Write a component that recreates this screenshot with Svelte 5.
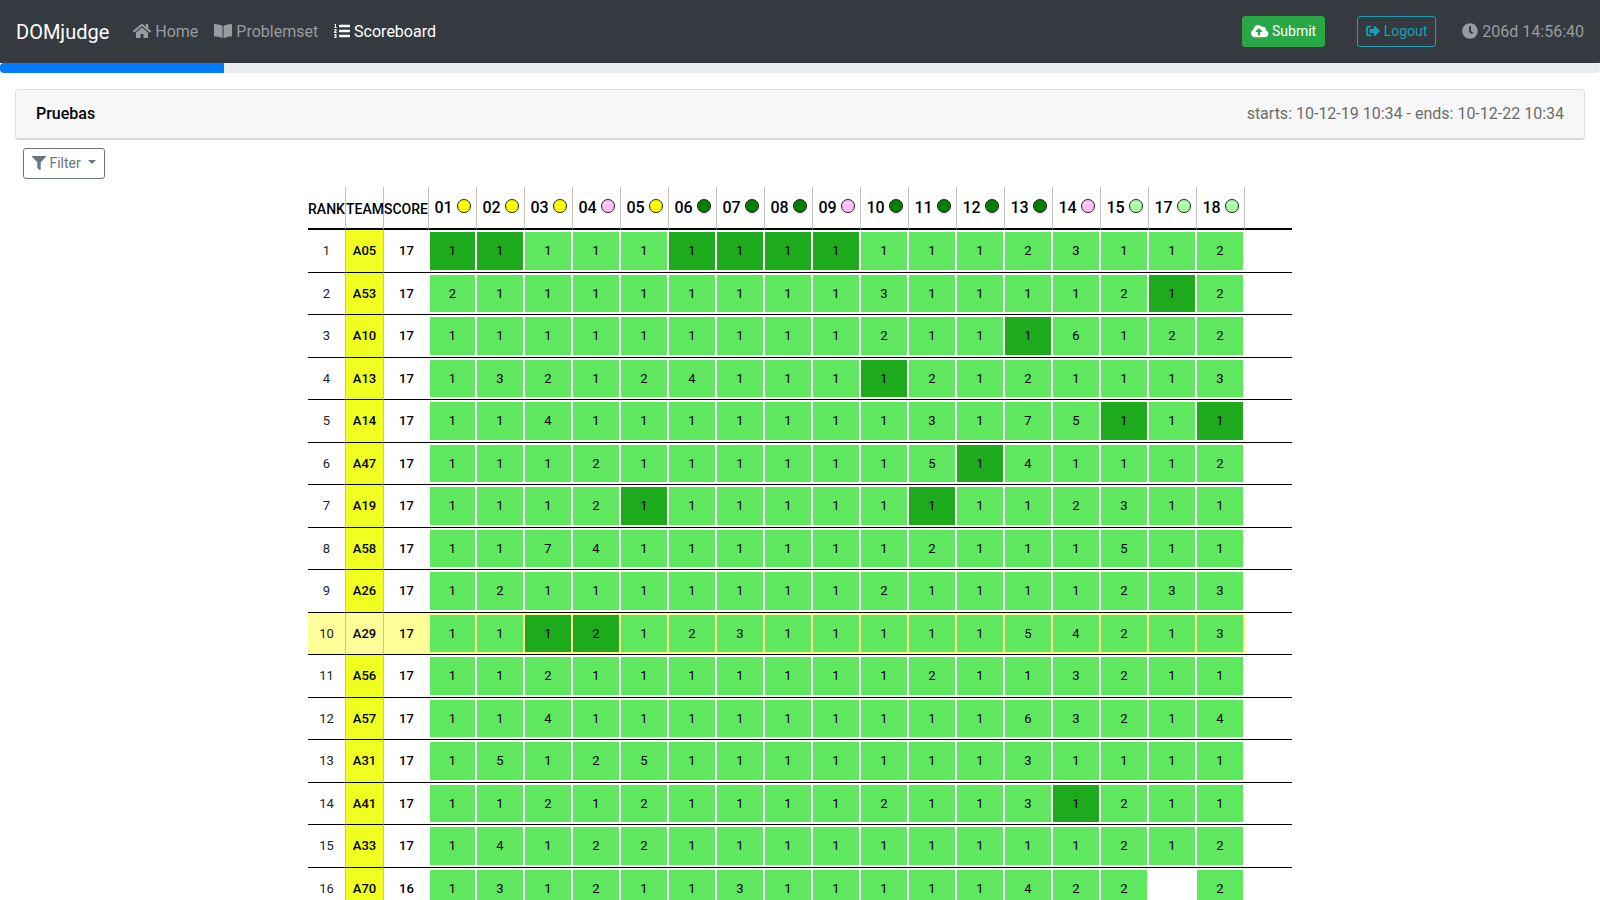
<script>
  const icons = {
    home: { w: 576, d: 'M280.37 148.26L96 300.11V464a16 16 0 0 0 16 16l112.06-.29a16 16 0 0 0 15.92-16V368a16 16 0 0 1 16-16h64a16 16 0 0 1 16 16v95.64a16 16 0 0 0 16 16.05L464 480a16 16 0 0 0 16-16V300L295.67 148.26a12.19 12.19 0 0 0-15.3 0zM571.6 251.47L488 182.56V44.05a12 12 0 0 0-12-12h-56a12 12 0 0 0-12 12v72.61L318.47 43a48 48 0 0 0-61 0L4.34 251.47a12 12 0 0 0-1.6 16.9l25.5 31A12 12 0 0 0 45.15 301l235.22-193.74a12.19 12.19 0 0 1 15.3 0L530.9 301a12 12 0 0 0 16.9-1.6l25.5-31a12 12 0 0 0-1.7-16.93z' },
    book: { w: 576, d: 'M542.22 32.05c-54.8 3.11-163.72 14.43-230.96 55.59-4.64 2.84-7.27 7.89-7.27 13.17v363.87c0 11.55 12.63 18.85 23.28 13.49 69.18-34.82 169.23-44.32 218.7-46.92 16.89-.89 30.02-14.43 30.02-30.66V62.75c.01-17.71-15.35-31.74-33.77-30.7zM264.73 87.64C197.5 46.48 88.58 35.17 33.78 32.05 15.36 31.01 0 45.04 0 62.75V400.6c0 16.24 13.13 29.78 30.02 30.66 49.49 2.6 149.59 12.11 218.77 46.95 10.62 5.35 23.21-1.94 23.21-13.46V100.63c0-5.29-2.62-10.14-7.27-12.99z' },
    list: { w: 512, d: 'M61.77 401l17.5-20.15a19.92 19.92 0 0 0 5.07-14.19v-3.31C84.34 356 80.5 352 73 352H16a8 8 0 0 0-8 8v16a8 8 0 0 0 8 8h22.83a157.41 157.41 0 0 0-11 12.31l-5.61 7c-4 5.07-5.25 10.13-2.8 14.88l1.05 1.93c3 5.76 6.29 7.88 12.25 7.88h4.73c10.33 0 15.94 2.44 15.94 9.09 0 4.72-4.2 8.22-14.36 8.22a41.54 41.54 0 0 1-15.47-3.12c-6.49-3.88-11.74-3.5-15.6 3.12l-5.59 9.31c-3.72 6.13-3.19 11.72 2.63 15.94 7.71 4.69 20.38 9.44 37 9.44 34.16 0 48.5-22.75 48.5-44.12-.03-14.38-9.12-29.76-28.73-34.88zM496 216H176a16 16 0 0 0-16 16v48a16 16 0 0 0 16 16h320a16 16 0 0 0 16-16v-48a16 16 0 0 0-16-16zm0-160H176a16 16 0 0 0-16 16v48a16 16 0 0 0 16 16h320a16 16 0 0 0 16-16V72a16 16 0 0 0-16-16zm0 320H176a16 16 0 0 0-16 16v48a16 16 0 0 0 16 16h320a16 16 0 0 0 16-16v-48a16 16 0 0 0-16-16zM16 160h64a8 8 0 0 0 8-8v-16a8 8 0 0 0-8-8H64V40a8 8 0 0 0-8-8H32a8 8 0 0 0-7.14 4.42l-8 16A8 8 0 0 0 24 64h8v64H16a8 8 0 0 0-8 8v16a8 8 0 0 0 8 8zm-3.91 160H80a8 8 0 0 0 8-8v-16a8 8 0 0 0-8-8H41.32c3.29-10.29 48.34-18.68 48.34-56.44 0-29.06-25-39.56-44.47-39.56-21.36 0-33.8 10-40.46 18.75-4.37 5.59-3 10.84 2.8 15.37l8.58 6.88c5.61 4.56 11 2.47 16.12-2.44a13.44 13.44 0 0 1 9.46-3.84c3.33 0 9.28 1.56 9.28 8.75C51 248.19 0 257.31 0 304.59v4C0 316 5.08 320 12.09 320z' },
    upload: { w: 640, d: 'M537.6 226.6c4.1-10.7 6.4-22.4 6.4-34.6 0-53-43-96-96-96-19.7 0-38.1 6-53.3 16.2C367 64.2 315.3 32 256 32c-88.4 0-160 71.6-160 160 0 2.7.1 5.4.2 8.1C40.2 219.8 0 273.2 0 336c0 79.5 64.5 144 144 144h368c70.7 0 128-57.3 128-128 0-61.9-44-113.6-102.4-125.4zM393.4 288H328v112c0 8.8-7.2 16-16 16h-48c-8.8 0-16-7.2-16-16V288h-65.4c-14.3 0-21.4-17.2-11.3-27.3l105.4-105.4c6.2-6.2 16.4-6.2 22.6 0l105.4 105.4c10.1 10.1 2.9 27.3-11.3 27.3z' },
    logout: { w: 512, d: 'M497 273L329 441c-15 15-41 4.5-41-17v-96H152c-13.3 0-24-10.7-24-24v-96c0-13.3 10.7-24 24-24h136V88c0-21.4 25.9-32 41-17l168 168c9.3 9.4 9.3 24.6 0 34zM192 436v-40c0-6.6-5.4-12-12-12H96c-17.7 0-32-14.3-32-32V160c0-17.7 14.3-32 32-32h84c6.6 0 12-5.4 12-12V76c0-6.6-5.4-12-12-12H96c-53 0-96 43-96 96v192c0 53 43 96 96 96h84c6.6 0 12-5.4 12-12z' },
    clock: { w: 512, d: 'M256,8C119,8,8,119,8,256S119,504,256,504,504,393,504,256,393,8,256,8Zm92.49,313h0l-20,25a16,16,0,0,1-22.49,2.5h0l-67-49.72a40,40,0,0,1-15-31.23V112a16,16,0,0,1,16-16h32a16,16,0,0,1,16,16V256l58,42.5A16,16,0,0,1,348.49,321Z' },
    filter: { w: 512, d: 'M487.976 0H24.028C2.71 0-8.047 25.866 7.058 40.971L192 225.941V432c0 7.831 3.821 15.17 10.237 19.662l80 55.98C298.02 518.69 320 507.493 320 487.98V225.941l184.947-184.97C520.021 25.896 509.338 0 487.976 0z' }
  };

  const problems = [
    ['01', 'yellow'], ['02', 'yellow'], ['03', 'yellow'], ['04', 'pink'], ['05', 'yellow'],
    ['06', 'green'], ['07', 'green'], ['08', 'green'], ['09', 'pink'], ['10', 'green'],
    ['11', 'green'], ['12', 'green'], ['13', 'green'], ['14', 'pink'], ['15', 'mint'],
    ['17', 'mint'], ['18', 'mint']
  ];

  // tries: one character per problem, '-' when untried; first: columns solved first by this team
  const teams = [
    { name: 'A05', score: 17, tries: '11111111111123112', first: [0, 1, 5, 6, 7, 8] },
    { name: 'A53', score: 17, tries: '21111111131111212', first: [15] },
    { name: 'A10', score: 17, tries: '11111111121116122', first: [12] },
    { name: 'A13', score: 17, tries: '13212411112121113', first: [9] },
    { name: 'A14', score: 17, tries: '11411111113175111', first: [14, 16] },
    { name: 'A47', score: 17, tries: '11121111115141112', first: [11] },
    { name: 'A19', score: 17, tries: '11121111111112311', first: [4, 10] },
    { name: 'A58', score: 17, tries: '11741111112111511', first: [] },
    { name: 'A26', score: 17, tries: '12111111121111233', first: [] },
    { name: 'A29', score: 17, tries: '11121231111154213', first: [2, 3], own: true },
    { name: 'A56', score: 17, tries: '11211111112113211', first: [] },
    { name: 'A57', score: 17, tries: '11411111111163214', first: [] },
    { name: 'A31', score: 17, tries: '15125111111131111', first: [] },
    { name: 'A41', score: 17, tries: '11212111121131211', first: [13] },
    { name: 'A33', score: 17, tries: '14122111111111212', first: [] },
    { name: 'A70', score: 16, tries: '131211311111422-2', first: [] }
  ];
</script>

{#snippet icon(name)}
  <svg class="icon" viewBox="0 0 {icons[name].w} 512" style="width: {icons[name].w / 512}em" aria-hidden="true">
    <path fill="currentColor" d={icons[name].d} />
  </svg>
{/snippet}

<nav class="navbar">
  <a class="brand" href="#home">DOMjudge</a>
  <div class="links">
    <a href="#home">{@render icon('home')} Home</a>
    <a href="#problems">{@render icon('book')} Problemset</a>
    <a class="active" href="#scoreboard">{@render icon('list')} Scoreboard</a>
  </div>
  <button class="btn submit">{@render icon('upload')} Submit</button>
  <button class="btn logout">{@render icon('logout')} Logout</button>
  <span class="time">{@render icon('clock')} 206d 14:56:40</span>
</nav>
<div class="progress"><div class="bar" style="width: 14%"></div></div>

<main>
  <header class="card">
    <span class="contest">Pruebas</span>
    <span class="period">starts: 10-12-19 10:34 - ends: 10-12-22 10:34</span>
  </header>
  <div class="tools">
    <button class="btn filter">{@render icon('filter')} Filter <span class="caret"></span></button>
  </div>

  <table>
    <colgroup>
      <col class="c-side" /><col class="c-side" /><col class="c-score" />
      {#each problems as _}<col class="c-problem" />{/each}
      <col class="c-end" />
    </colgroup>
    <thead>
      <tr>
        <th class="label">RANK</th><th class="label">TEAM</th><th class="label">SCORE</th>
        {#each problems as [label, color]}
          <th class="problem"><a href="#p{label}">{label} <span class="dot {color}"></span></a></th>
        {/each}
        <td></td>
      </tr>
    </thead>
    <tbody>
      {#each teams as team, i}
        <tr class:own={team.own}>
          <td class="rank">{i + 1}</td>
          <th class="team" scope="row">{team.name}</th>
          <td class="score">{team.score}</td>
          {#each team.tries as n, k}
            <td class="cell">
              {#if n !== '-'}
                <a href="#t{i}p{k}" class:first={team.first.includes(k)}>{n}</a>
              {/if}
            </td>
          {/each}
          <td class="end"></td>
        </tr>
      {/each}
    </tbody>
  </table>
</main>

<style>
  :global(body) {
    margin: 0;
    background: #fff;
    color: #212529;
    font: 16px/24px Roboto, 'Liberation Sans', sans-serif;
  }
  a {
    color: inherit;
    text-decoration: none;
  }
  .icon {
    height: 1em;
    vertical-align: -2px;
    overflow: visible;
  }
  .navbar {
    display: flex;
    align-items: center;
    height: 63px;
    padding: 0 16px;
    background: #343a40;
    color: #999c9f;
    white-space: nowrap;
  }
  .brand {
    margin-right: 24px;
    color: #fff;
    font-size: 20px;
    line-height: 30px;
  }
  .links {
    display: flex;
    gap: 16px;
    margin-right: auto;
  }
  .active {
    color: #fff;
  }
  .btn {
    box-sizing: border-box;
    height: 31px;
    padding: 4px 8px;
    border: 1px solid;
    border-radius: 3px;
    background: transparent;
    font: 14px/21px Roboto, 'Liberation Sans', sans-serif;
    cursor: pointer;
  }
  .submit {
    margin-right: 32px;
    border-color: #28a745;
    background: #28a745;
    color: #fff;
  }
  .logout {
    margin-right: 26px;
    border-color: #17a2b8;
    color: #17a2b8;
  }
  .progress {
    height: 10px;
    overflow: hidden;
    border-radius: 4px;
    background: #e9ecef;
  }
  .bar {
    height: 100%;
    background: #007bff;
  }
  main {
    padding: 16px 15px 0;
  }
  .card {
    display: flex;
    justify-content: space-between;
    padding: 12px 20px;
    border: 1px solid #dfdfdf;
    border-bottom: 2px solid #d8d8d8;
    border-radius: 4px;
    background: #f7f7f7;
  }
  .contest {
    color: #000;
    font-weight: 500;
  }
  .period {
    color: #6c6c6c;
  }
  .tools {
    display: flex;
    padding: 8px;
  }
  .filter {
    color: #6c757d;
  }
  .caret {
    display: inline-block;
    margin-left: 4px;
    border-top: 4px solid;
    border-right: 4px solid transparent;
    border-left: 4px solid transparent;
    vertical-align: 4px;
  }
  table {
    width: 984px;
    margin: 0 auto;
    border-collapse: separate;
    border-spacing: 0;
    table-layout: fixed;
    color: #000;
    font-size: 13px;
    line-height: 20px;
    text-align: center;
  }
  .c-side {
    width: 38px;
  }
  .c-score {
    width: 45px;
  }
  .c-problem {
    width: 48px;
  }
  th,
  td {
    box-sizing: border-box;
    padding: 0;
    white-space: nowrap;
  }
  th {
    font-weight: 500;
  }
  thead th,
  thead td {
    height: 43px;
    border-bottom: 2px solid #000;
  }
  thead th {
    border-right: 1px solid silver;
  }
  .label {
    padding-top: 2px;
    font-size: 14px;
  }
  .problem {
    font-size: 16px;
  }
  .dot {
    display: inline-block;
    box-sizing: border-box;
    width: 14px;
    height: 14px;
    border: 1px solid #222;
    border-radius: 50%;
    vertical-align: 0;
  }
  .yellow {
    background: #ff0;
  }
  .pink {
    background: #ffc0fb;
  }
  .green {
    background: #008000;
  }
  .mint {
    background: #adffa5;
  }
  tbody td,
  tbody th {
    height: 42px;
    border-bottom: 1px solid #000;
  }
  tbody tr:nth-child(odd) > * {
    height: 43px;
  }
  .rank,
  .team {
    border-right: 1px solid silver;
  }
  .rank {
    color: #212529;
  }
  .team {
    background: #f0ff20;
  }
  .score {
    font-weight: 500;
  }
  .cell {
    padding: 2px 2px 2px 0;
  }
  .score + .cell {
    padding-left: 1px;
  }
  .cell a {
    display: flex;
    align-items: center;
    justify-content: center;
    height: 37px;
    background: #60e760;
  }
  tbody tr:nth-child(odd) .cell a {
    height: 38px;
  }
  .cell a.first {
    background: #1daa1d;
  }
  .own > :not(.end) {
    background: #ffff99;
  }
</style>
